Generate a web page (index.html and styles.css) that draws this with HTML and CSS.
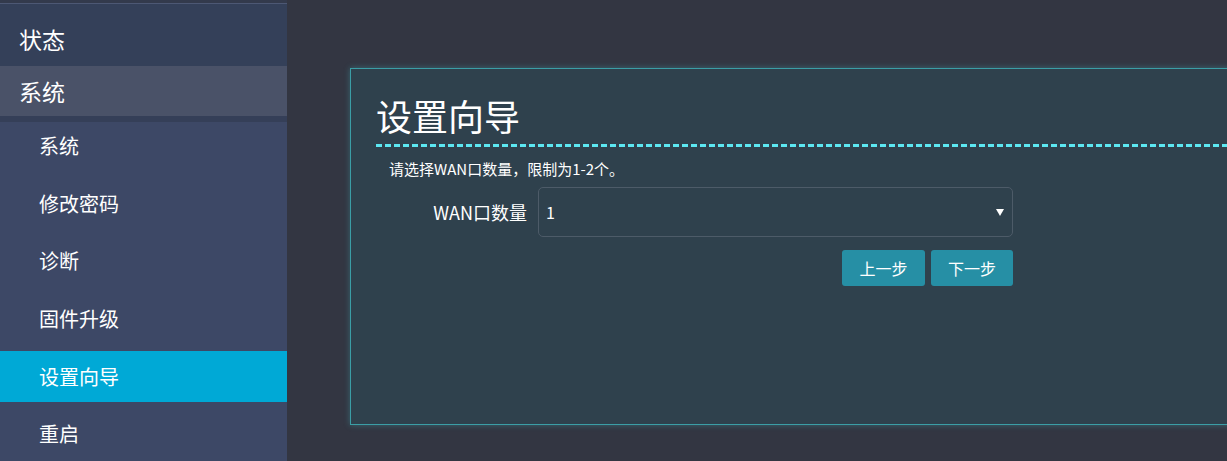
FILE: index.html
```html
<!DOCTYPE html>
<html lang="zh-CN">
<head>
<meta charset="utf-8">
<title>设置向导</title>
<link rel="stylesheet" href="styles.css">
</head>
<body>
<div class="page">
  <aside class="sidebar">
    <div class="menu-top">状态</div>
    <div class="menu-top menu-top-open">系统</div>
    <ul class="submenu">
      <li class="sub-item">系统</li>
      <li class="sub-item">修改密码</li>
      <li class="sub-item">诊断</li>
      <li class="sub-item">固件升级</li>
      <li class="sub-item sub-item-active">设置向导</li>
      <li class="sub-item">重启</li>
    </ul>
  </aside>
  <main class="main">
    <section class="card">
      <h1 class="card-title">设置向导</h1>
      <p class="help">请选择WAN口数量，限制为1-2个。</p>
      <div class="form-row">
        <label class="form-label">WAN口数量</label>
        <div class="select">
          <span class="select-value">1</span>
          <span class="select-arrow"></span>
        </div>
      </div>
      <div class="actions">
        <button class="btn">上一步</button>
        <button class="btn">下一步</button>
      </div>
    </section>
  </main>
</div>
</body>
</html>
```

FILE: styles.css
```css
* { box-sizing: border-box; }
html, body { margin: 0; padding: 0; }
body {
  width: 1227px;
  height: 461px;
  overflow: hidden;
  background: #333642;
  color: #ffffff;
  font-family: "Noto Sans CJK SC", "Noto Sans", sans-serif;
}
.page {
  display: flex;
  height: 461px;
}
.sidebar {
  width: 287px;
  flex: none;
  background: #3d4866;
  border-top: 3px solid #333a4c;
  display: flex;
  flex-direction: column;
}
.menu-top {
  height: 50px;
  padding-left: 19px;
  font-size: 23px;
  line-height: 50px;
  background: #344059;
}
.menu-top:first-child {
  height: 63px;
  line-height: 54px;
  padding-top: 8px;
  border-top: 1px solid #4d5874;
}
.menu-top-open {
  background: #4a5268;
  margin-bottom: 6px;
  box-shadow: 0 6px 0 #353f58;
}
.submenu {
  list-style: none;
  margin: -2px 0 0;
  padding: 0;
}
.sub-item {
  height: 51px;
  line-height: 51px;
  margin-bottom: 6.7px;
  padding-left: 39px;
  font-size: 20px;
}
.sub-item-active {
  background: #00a9d6;
}
.main {
  flex: 1;
  overflow: hidden;
  padding: 68px 0 0 63px;
}
.card {
  width: calc(100% + 60px);
  height: 357px;
  background: #2f414d;
  border: 1px solid #3b9ea6;
  box-shadow: 0 0 6px rgba(70, 200, 210, 0.35);
  padding: 24px 0 0 25px;
}
.card-title {
  margin: 0;
  font-size: 36px;
  font-weight: normal;
  line-height: 45px;
  background-image: linear-gradient(to right, #5ce8f2 6px, transparent 6px);
  background-size: 9px 3px;
  background-repeat: repeat-x;
  background-position: 0 100%;
  padding-bottom: 9px;
}
.help {
  margin: 12px 0 0 13px;
  font-size: 15px;
  line-height: 20px;
}
.form-row {
  display: flex;
  align-items: center;
  gap: 11px;
  margin-top: 8px;
}
.form-label {
  width: 151px;
  text-align: right;
  font-size: 18px;
}
.select {
  width: 475px;
  height: 50px;
  border: 1px solid #4d5b68;
  border-radius: 5px;
  display: flex;
  align-items: center;
  justify-content: space-between;
  padding: 0 8px 0 7px;
}
.select-value {
  font-size: 16px;
}
.select-arrow {
  width: 0;
  height: 0;
  border-left: 4px solid transparent;
  border-right: 4px solid transparent;
  border-top: 7px solid #ffffff;
}
.actions {
  width: 637px;
  display: flex;
  justify-content: flex-end;
  gap: 6px;
  margin-top: 13px;
}
.btn {
  height: 36px;
  width: 83px;
  border: none;
  border-radius: 3px;
  background: #268fa5;
  color: #ffffff;
  font-family: "Noto Sans CJK SC", "Noto Sans", sans-serif;
  font-size: 16px;
  padding: 0;
}
.btn + .btn { width: 82px; }
```
